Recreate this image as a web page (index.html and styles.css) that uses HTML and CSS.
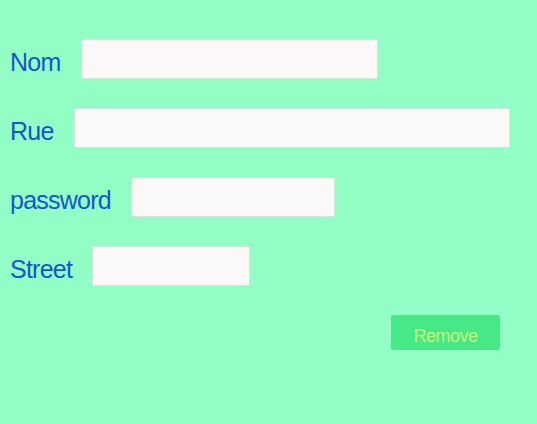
FILE: index.html
```html
<!DOCTYPE html>
<html>
<head>
<meta charset="utf-8">
<link rel="stylesheet" href="styles.css">
</head>
<body>
<form class="form">
  <div class="row"><label class="label">Nom</label><input class="field w-nom" type="text"></div>
  <div class="row"><label class="label">Rue</label><input class="field w-rue" type="text"></div>
  <div class="row"><label class="label">password</label><input class="field w-pass" type="password"></div>
  <div class="row"><label class="label">Street</label><input class="field w-street" type="text"></div>
  <button class="remove" type="button">Remove</button>
</form>
</body>
</html>
```
FILE: styles.css
```css
html, body {
  margin: 0;
  padding: 0;
  background: #93fdc6;
  width: 537px;
  height: 424px;
  overflow: hidden;
}
.form {
  display: flex;
  flex-direction: column;
  gap: 29px;
  padding: 39px 0 0 10px;
  width: 490px;
  font-family: "Liberation Sans", Arial, sans-serif;
}
.row {
  display: flex;
  align-items: center;
  gap: 20px;
  height: 40px;
}
.label {
  flex-shrink: 0;
  color: #1456cc;
  font-size: 25px;
  letter-spacing: -0.75px;
  line-height: 40px;
  padding-top: 6px;
}
.field {
  flex-shrink: 0;
  box-sizing: border-box;
  height: 40px;
  margin: 0;
  border: 1px solid #d2e6dc;
  border-radius: 2px;
  background: #faf9f7;
  outline: none;
}
.w-nom { width: 297px; }
.w-rue { width: 436px; }
.w-pass { width: 204px; }
.w-street { width: 158px; }
.remove {
  align-self: flex-end;
  box-sizing: border-box;
  width: 109px;
  height: 35px;
  margin: 0;
  border: none;
  border-radius: 2px;
  background: #47e886;
  color: #c6f57b;
  font-family: "Liberation Sans", Arial, sans-serif;
  font-size: 18px;
  letter-spacing: -0.5px;
  padding: 7px 0 0 0;
}
```
